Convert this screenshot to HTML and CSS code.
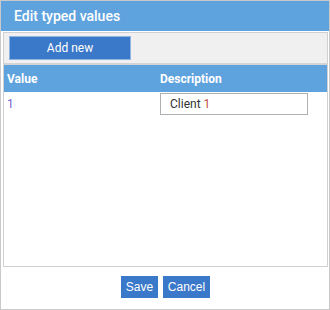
FILE: index.html
```html
<!DOCTYPE html>
<html>
	<head>
		<link rel="stylesheet" href="styles.css">
	</head>
	<body>
		<div class="dialog">
			<div class="titlebar">Edit typed values</div>
			<div class="panel">
				<div class="toolbar">
					<button class="addbtn">Add new</button>
				</div>
				<table class="grid">
					<tr class="headrow">
						<th class="colvalue">Value</th>
						<th>Description</th>
					</tr>
					<tr>
						<td class="valcell">1</td>
						<td><div class="descbox">Client <span class="num">1</span></div></td>
					</tr>
				</table>
			</div>
			<div class="footer">
				<button class="fbutton savebtn">Save</button>
				<button class="fbutton cancelbtn">Cancel</button>
			</div>
		</div>
	</body>
</html>
```

FILE: styles.css
```css
body {
	margin: 0; background: #fff;
}
.dialog {
	width: 330px; height: 310px; box-sizing: border-box; border: 1px solid #c9c9c9; background: #fff;
}
.titlebar {
	height: 30px; line-height: 30px; background: #5fa3de; color: #fff; padding-left: 13px;
	font-family: Roboto, sans-serif; font-size: 14px; font-weight: 500;
}
.panel {
	margin: 1px 1px 0 2px; height: 235px; box-sizing: border-box; border: 1px solid #d0d0d0;
}
.toolbar {
	height: 30px; background: #f0f0f0; border-bottom: 2px solid #d4d4d4; box-sizing: content-box;
	display: flex; align-items: flex-start;
}
.addbtn {
	margin: 3px 0 0 5px; width: 122px; height: 24px; background: #3a78c9; color: #fff;
	border: 1px solid #8fb4e3; font-family: Roboto, sans-serif; font-size: 12px; padding: 0;
}
.grid {
	width: 100%; border-collapse: collapse; font-family: Roboto, sans-serif; font-size: 12px;
}
.headrow {
	background: #5fa3de; color: #fff; height: 27px;
}
.headrow th {
	text-align: left; font-weight: 700; padding: 1px 0 0 0;
}
.headrow .colvalue {
	width: 153px; padding-left: 3px;
}
.grid td {
	padding: 1px 0 0 0;
}
.grid .valcell {
	color: #6f66d8; padding-left: 3px; vertical-align: middle;
}
.descbox {
	width: 148px; height: 22px; box-sizing: border-box; border: 1px solid #b0b0b0;
	padding-left: 9px; line-height: 20px; font-size: 12px; color: #333;
}
.num {
	color: #c0504a;
}
.footer {
	display: flex; justify-content: center; gap: 5px; margin-top: 9px; padding-left: 1px;
}
.fbutton {
	height: 22px; background: #3a78c9; color: #fff; border: none; padding: 0;
	font-family: "Liberation Sans", Arial, sans-serif; font-size: 12px;
}
.savebtn {
	width: 37px;
}
.cancelbtn {
	width: 47px;
}
```
